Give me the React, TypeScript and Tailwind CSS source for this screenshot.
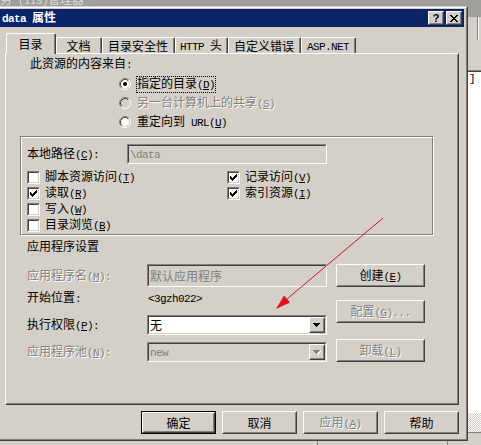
import React from 'react';

const MONO = "font-['Liberation_Mono',monospace] text-[11px] tracking-[-0.6px]";
const DIS = "text-[#808080] [text-shadow:1px_1px_0_#ffffff]";

function T({ s, className = '' }: { s: string; className?: string }) {
  const parts: React.ReactNode[] = [];
  let buf = '';
  let bufAscii: boolean | null = null;
  let key = 0;
  const flush = () => {
    if (buf) {
      parts.push(
        <span key={key++} className={bufAscii ? MONO : ''}>
          {buf}
        </span>
      );
    }
    buf = '';
    bufAscii = null;
  };
  for (let i = 0; i < s.length; i++) {
    let ch = s[i];
    let ul = false;
    if (ch === '&' && i + 1 < s.length) {
      ul = true;
      i++;
      ch = s[i];
    }
    const ascii = ch.charCodeAt(0) < 128;
    if (ul) {
      flush();
      parts.push(
        <span key={key++} className={ascii ? `${MONO} underline` : 'underline'}>
          {ch}
        </span>
      );
    } else {
      if (bufAscii !== null && bufAscii !== ascii) flush();
      bufAscii = ascii;
      buf += ch;
    }
  }
  flush();
  return <span className={`whitespace-pre ${className}`}>{parts}</span>;
}

function Sunken({
  className = '',
  inner = '',
  children,
}: {
  className?: string;
  inner?: string;
  children?: React.ReactNode;
}) {
  return (
    <div className={`shrink-0 border border-t-[#808080] border-l-[#808080] border-b-white border-r-white ${className}`}>
      <div className={`h-full w-full border border-t-[#404040] border-l-[#404040] border-b-[#d4d0c8] border-r-[#d4d0c8] ${inner}`}>
        {children}
      </div>
    </div>
  );
}

function Raised({ className = '', children }: { className?: string; children?: React.ReactNode }) {
  return (
    <div className={`shrink-0 border border-t-white border-l-white border-b-[#404040] border-r-[#404040] bg-[#d4d0c8] ${className}`}>
      <div className="flex h-full w-full items-center justify-center border border-t-[#d4d0c8] border-l-[#d4d0c8] border-b-[#808080] border-r-[#808080]">
        {children}
      </div>
    </div>
  );
}

function Btn({ label, className = '', disabled = false }: { label: string; className?: string; disabled?: boolean }) {
  return (
    <Raised className={className}>
      <T s={label} className={disabled ? DIS : ''} />
    </Raised>
  );
}

function DefBtn({ label }: { label: string }) {
  return (
    <div className="h-[23px] w-[75px] shrink-0 border border-black">
      <Raised className="h-full w-full">
        <T s={label} />
      </Raised>
    </div>
  );
}

const CHECK: [number, number][] = [
  [0, 2],
  [1, 3],
  [2, 4],
  [3, 3],
  [4, 2],
  [5, 1],
  [6, 0],
];

function Check({ checked = false }: { checked?: boolean }) {
  return (
    <div className="h-[13px] w-[13px] shrink-0 border border-t-[#808080] border-l-[#808080] border-b-white border-r-white">
      <div className="h-full w-full border border-t-[#404040] border-l-[#404040] border-b-[#d4d0c8] border-r-[#d4d0c8] bg-white">
        {checked && (
          <svg width="9" height="9" className="block" shapeRendering="crispEdges">
            {CHECK.map(([x, y]) => (
              <rect key={x} x={x + 1} y={y + 1} width="1" height="3" fill="#000" />
            ))}
          </svg>
        )}
      </div>
    </div>
  );
}

function Radio({ checked = false, disabled = false }: { checked?: boolean; disabled?: boolean }) {
  return (
    <svg width="12" height="12" viewBox="0 0 12 12" className="block shrink-0">
      <circle cx="6" cy="6" r="4.5" fill={disabled ? '#d4d0c8' : '#ffffff'} />
      <path d="M2.11 9.89 A5.5 5.5 0 0 1 9.89 2.11" stroke="#808080" fill="none" />
      <path d="M9.89 2.11 A5.5 5.5 0 0 1 2.11 9.89" stroke="#ffffff" fill="none" />
      <path d="M2.82 9.18 A4.5 4.5 0 0 1 9.18 2.82" stroke="#404040" fill="none" />
      <path d="M9.18 2.82 A4.5 4.5 0 0 1 2.82 9.18" stroke="#d4d0c8" fill="none" />
      {checked && <circle cx="6" cy="6" r="2" fill="#000" />}
    </svg>
  );
}

function Arrow({ disabled = false }: { disabled?: boolean }) {
  const rows = (dx: number, dy: number, c: string) =>
    [0, 1, 2, 3].map((r) => <rect key={`${dx}${r}`} x={r + dx} y={r + dy} width={7 - 2 * r} height="1" fill={c} />);
  return (
    <svg width="8" height="5" className="block" shapeRendering="crispEdges">
      {disabled ? (
        <>
          {rows(1, 1, '#ffffff')}
          {rows(0, 0, '#808080')}
        </>
      ) : (
        rows(0, 0, '#000000')
      )}
    </svg>
  );
}

function Combo({ value, disabled = false }: { value: string; disabled?: boolean }) {
  return (
    <Sunken className="h-[20px] w-[180px]" inner={`flex ${disabled ? 'bg-[#d4d0c8]' : 'bg-white'}`}>
      <div className={`flex flex-1 items-center pl-[1px] ${disabled ? 'text-[#808080]' : ''}`}>
        <T s={value} />
      </div>
      <Raised className="h-[16px] w-[16px]">
        <Arrow disabled={disabled} />
      </Raised>
    </Sunken>
  );
}

function Tab({ label, className, selected = false }: { label: string; className: string; selected?: boolean }) {
  return (
    <div
      className={`shrink-0 rounded-t-[2px] border-t border-l border-r border-t-white border-l-white border-r-[#404040] bg-[#d4d0c8] ${className} ${
        selected ? 'relative z-10 -mb-px h-[21px]' : 'h-[16px]'
      }`}
    >
      <div className={`flex h-full items-center justify-center border-r border-r-[#808080] ${selected ? 'pb-[1px]' : 'pt-[1px]'}`}>
        <T s={label} />
      </div>
    </div>
  );
}

function CheckRow({ label, checked = false }: { label: string; checked?: boolean }) {
  return (
    <div className="flex h-[16px] items-center">
      <Check checked={checked} />
      <T s={label} className="ml-[5px]" />
    </div>
  );
}

function Dialog() {
  return (
    <div className="h-[435px] w-[468px] shrink-0 border-t border-r border-b border-t-[#d4d0c8] border-r-[#404040] border-b-[#404040] bg-[#d4d0c8]">
      <div className="flex h-full w-full flex-col border-t border-r border-b border-t-white border-r-[#808080] border-b-[#808080] pt-[1px] pr-[2px] pb-[2px]">
        {/* title bar */}
        <div className="flex h-[18px] shrink-0 items-center justify-between bg-[#0a246a] pl-[2px] pr-[2px] font-bold text-white">
          <T s="data 属性" />
          <div className="flex gap-[2px]">
            <Raised className="h-[14px] w-[16px]">
              <span className="font-['Liberation_Sans',sans-serif] text-[11px] leading-[10px] font-bold text-black">?</span>
            </Raised>
            <Raised className="h-[14px] w-[16px]">
              <svg width="8" height="7" className="block" shapeRendering="crispEdges">
                {[0, 1, 2, 3, 4, 5, 6].map((i) => (
                  <React.Fragment key={i}>
                    <rect x={i * (6 / 6)} y={i} width="2" height="1" fill="#000" />
                    <rect x={6 - i} y={i} width="2" height="1" fill="#000" />
                  </React.Fragment>
                ))}
              </svg>
            </Raised>
          </div>
        </div>

        {/* tabs */}
        <div className="mt-[6px] flex h-[20px] shrink-0 items-end pl-[6px]">
          <Tab label="目录" className="w-[50px]" selected />
          <Tab label="文档" className="w-[46px]" />
          <Tab label="目录安全性" className="w-[73px]" />
          <Tab label="HTTP 头" className="w-[53px]" />
          <Tab label="自定义错误" className="w-[73px]" />
          <Tab label="ASP.NET" className="w-[55px]" />
        </div>

        {/* panel */}
        <div className="ml-[5px] h-[352px] w-[454px] shrink-0 border border-t-white border-l-white border-b-[#404040] border-r-[#404040]">
          <div className="flex h-full w-full flex-col border border-t-[#d4d0c8] border-l-[#d4d0c8] border-b-[#808080] border-r-[#808080]">
            <div className="mt-[1px] flex h-[16px] items-center pl-[23px]">
              <T s="此资源的内容来自:" />
            </div>

            <div className="mt-[3px] flex flex-col gap-[1px] pl-[112px]">
              <div className="flex h-[18px] items-center">
                <Radio checked />
                <span className="ml-[5px] flex h-[17px] items-center border border-dotted border-black">
                  <T s="指定的目录(&D)" />
                </span>
              </div>
              <div className="flex h-[18px] items-center">
                <Radio disabled />
                <T s="另一台计算机上的共享(&S)" className={`ml-[6px] ${DIS}`} />
              </div>
              <div className="flex h-[18px] items-center">
                <Radio />
                <T s="重定向到 URL(&U)" className="ml-[6px]" />
              </div>
            </div>

            {/* group box */}
            <div className="mt-[5px] ml-[13px] h-[100px] w-[414px] border border-t-[#808080] border-l-[#808080] border-b-white border-r-white">
              <div className="h-full w-full border border-t-white border-l-white border-b-[#808080] border-r-[#808080]">
                <div className="mt-[6px] flex h-[20px] items-center pl-[5px]">
                  <div className="w-[100px]">
                    <T s="本地路径(&C):" />
                  </div>
                  <Sunken className="h-[20px] w-[200px]" inner="flex items-center bg-[#d4d0c8] pl-[1px] text-[#808080]">
                    <T s="\data" />
                  </Sunken>
                </div>
                <div className="mt-[5px] grid grid-cols-[200px_1fr] pl-[5px]">
                  <CheckRow label="脚本资源访问(&T)" />
                  <CheckRow label="记录访问(&V)" checked />
                  <CheckRow label="读取(&R)" checked />
                  <CheckRow label="索引资源(&I)" checked />
                  <CheckRow label="写入(&W)" />
                  <div />
                  <CheckRow label="目录浏览(&B)" />
                  <div />
                </div>
              </div>
            </div>

            <div className="mt-[2px] flex h-[16px] items-center pl-[20px]">
              <T s="应用程序设置" />
            </div>

            <div className="mt-[10px] flex pl-[20px]">
              <div className="flex w-[300px] flex-col">
                <div className="flex h-[23px] items-center">
                  <div className="w-[120px]">
                    <T s="应用程序名(&M):" className={DIS} />
                  </div>
                  <Sunken className="h-[23px] w-[180px]" inner="flex items-center bg-[#d4d0c8] pl-[1px] text-[#808080]">
                    <T s="默认应用程序" />
                  </Sunken>
                </div>
                <div className="flex h-[22px] items-center">
                  <div className="w-[120px]">
                    <T s="开始位置:" />
                  </div>
                  <T s="<3gzh022>" className="ml-[1px]" />
                </div>
                <div className="mt-[6px] flex h-[20px] items-center">
                  <div className="w-[120px]">
                    <T s="执行权限(&P):" />
                  </div>
                  <Combo value="无" />
                </div>
                <div className="mt-[7px] flex h-[20px] items-center">
                  <div className="w-[120px]">
                    <T s="应用程序池(&N):" className={DIS} />
                  </div>
                  <Combo value="new" disabled />
                </div>
              </div>
              <div className="ml-[9px] flex flex-col">
                <Btn label="创建(&E)" className="h-[23px] w-[89px]" />
                <Btn label="配置(&G)..." className="mt-[13px] h-[23px] w-[89px]" disabled />
                <Btn label="卸载(&L)" className="mt-[16px] h-[23px] w-[89px]" disabled />
              </div>
            </div>
          </div>
        </div>

        {/* bottom buttons */}
        <div className="mt-[6px] flex shrink-0 justify-end gap-[6px] pr-[5px]">
          <DefBtn label="确定" />
          <Btn label="取消" className="h-[23px] w-[75px]" />
          <Btn label="应用(&A)" className="h-[23px] w-[75px]" disabled />
          <Btn label="帮助" className="h-[23px] w-[75px]" />
        </div>
      </div>
    </div>
  );
}

function RightStrip() {
  return (
    <div className="flex min-w-0 flex-1 flex-col">
      <div className="h-[11px] shrink-0 bg-[#a19f9b]" />
      <div className="flex h-[23px] shrink-0 bg-[#d4d0c8]">
        <div className="w-[9px]" />
        <div className="w-[1px] bg-[#808080]" />
        <div className="w-[1px] bg-white" />
      </div>
      <div className="h-[30px] shrink-0" />
      <div className="h-[1px] shrink-0 bg-[#808080]" />
      <div className="h-[1px] shrink-0 bg-[#404040]" />
      <div className="h-[341px] shrink-0 overflow-hidden bg-white pl-[1px] leading-[10px]">
        <T s="]" />
      </div>
      <div className="h-[19px] shrink-0 bg-[image:repeating-conic-gradient(#ffffff_0_25%,#d4d0c8_0_50%)] bg-[length:2px_2px]" />
      <div className="h-[1px] shrink-0 bg-[#808080]" />
      <div className="flex-1" />
    </div>
  );
}

export default function App() {
  return (
    <div className="relative flex h-[445px] w-[481px] flex-col overflow-hidden bg-[#d4d0c8] font-['Noto_Sans_CJK_SC',sans-serif] text-[12px] leading-[16px] text-black">
      <div className="h-[6px] shrink-0 overflow-hidden bg-[#a19f9b] text-[#dedede]">
        <div className="-mt-[8px] -ml-[12px] h-[14px] leading-[14px] blur-[0.4px]">
          <T s="服务 (IIS)管理器" />
        </div>
      </div>
      <div className="flex h-[435px] shrink-0">
        <Dialog />
        <RightStrip />
      </div>
      <div className="flex flex-1">
        <div className="w-[317px]" />
        <div className="w-[1px] bg-[#808080]" />
        <div className="w-[129px]" />
        <div className="w-[1px] bg-[#808080]" />
      </div>
      <svg className="pointer-events-none absolute top-0 left-0" width="481" height="445">
        <line x1="383" y1="218" x2="287" y2="299" stroke="#d0142a" strokeWidth="1" />
        <polygon points="276,309 290,302.6 284,295.4" fill="#e8101c" />
      </svg>
    </div>
  );
}
